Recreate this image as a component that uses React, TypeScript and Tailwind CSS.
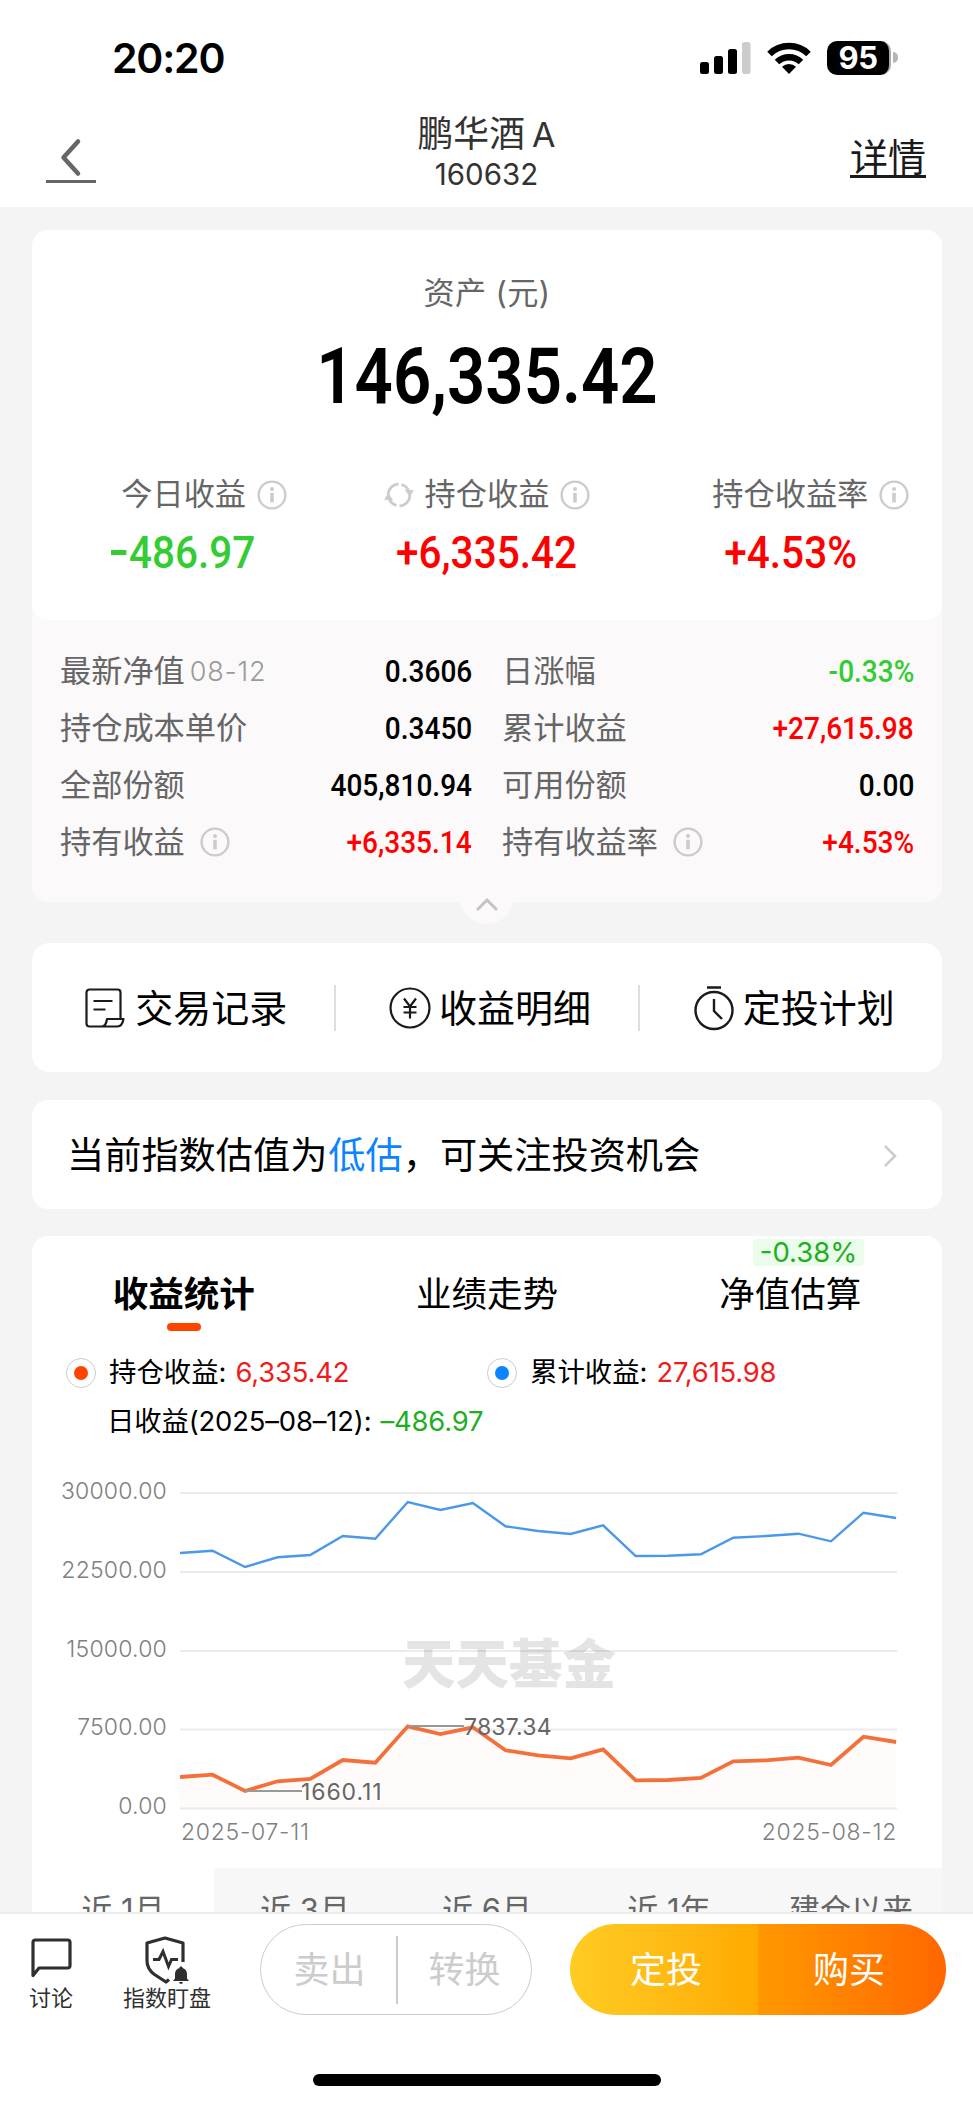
import type { ReactNode } from "react";

const latestProfit = [
  951, 944, 993, 964, 957, 900, 908, 799, 822, 802, 871, 886, 895, 868, 961,
  960, 954, 904, 901, 893, 915, 830, 846,
];
const totalProfit = [
  279, 272, 321, 292, 285, 228, 236, 126, 150, 129, 199, 213, 222, 196, 288,
  287.5, 283, 233, 228, 221, 244, 158, 174,
];

const toPoints = (values: number[]) =>
  values
    .map((v, i) => `${(i * 32.55).toFixed(1)},${((v - 99) / 3 + 10).toFixed(1)}`)
    .join(" ");

const InfoIcon = () => (
  <svg width="30" height="30" viewBox="0 0 30 30" fill="none">
    <circle cx="15" cy="15" r="13.4" stroke="#cccccc" strokeWidth="2.4" />
    <circle cx="15" cy="9" r="2" fill="#cccccc" />
    <path d="M15 12.800v9.600" stroke="#cccccc" strokeWidth="3.6" />
  </svg>
);

const RefreshIcon = () => (
  <svg width="32" height="30" viewBox="0 0 32 30" fill="none">
    <path
      d="M15.500 3.500A11.300 11.300 0 0 0 4.700 17M18.500 3.800A11.300 11.300 0 0 1 26.500 11M16.500 26.500A11.300 11.300 0 0 0 27.300 13M13.500 26.200A11.300 11.300 0 0 1 5.500 19"
      stroke="#cccccc"
      strokeWidth="3"
    />
    <path d="M0 20l4.500-6.500L10 20.500zM32 10l-4.500 6.500L22 9.500z" fill="#cccccc" />
  </svg>
);

const BillIcon = () => (
  <svg width="42" height="42" viewBox="0 0 42 42" fill="none" stroke="#1a1a1a" strokeWidth="2.200">
    <path d="M35.500 31V5.500a3 3 0 0 0-3-3h-28a3 3 0 0 0-3 3v31a3 3 0 0 0 3 3h28q4.500 0 6-7.500H22q-1 7.500-5.500 7.500" strokeLinejoin="round" />
    <path d="M8.500 14h19M8.500 22.500h12" />
  </svg>
);

const YenIcon = () => (
  <svg width="42" height="42" viewBox="0 0 42 42" fill="none" stroke="#1a1a1a" strokeWidth="2.200">
    <circle cx="21" cy="21" r="19.500" />
    <path d="M15 11.500l6 8 6-8M21 19.500v12M14.500 20h13M14.500 25.500h13" />
  </svg>
);

const TimerIcon = () => (
  <svg width="42" height="46" viewBox="0 0 42 46" fill="none" stroke="#1a1a1a" strokeWidth="2.400">
    <circle cx="21" cy="25.500" r="18.500" />
    <path d="M14 2.500h14M21 14v12l8 8" />
  </svg>
);

const CommentIcon = () => (
  <svg width="42" height="48" viewBox="0 0 42 48" fill="none">
    <path
      d="M3 39.500V6.500a2.500 2.500 0 0 1 2.500-2.500h32a2.500 2.500 0 0 1 2.500 2.500v23a2.500 2.500 0 0 1-2.500 2.500H9z"
      stroke="#2f2f2f"
      strokeWidth="3.200"
      strokeLinejoin="round"
    />
  </svg>
);

const ShieldIcon = () => (
  <svg width="46" height="48" viewBox="0 0 46 48" fill="none">
    <path
      d="M39 26V7L21 2 3 7v18q0 8 7.500 13.500l11.500 7.500 3-2.500"
      stroke="#2f2f2f"
      strokeWidth="3.200"
      strokeLinejoin="round"
    />
    <path d="M9 23.500h6l4-8 5.500 15 3-7h6.500" stroke="#2f2f2f" strokeWidth="3" />
    <path
      d="M37 30.500c1 0 1.600.6 1.700 1.500 2.800.9 4.300 3 4.300 6v4.500l2 2.500H29l2-2.500V38c0-3 1.500-5.100 4.300-6 .1-.9.7-1.500 1.700-1.500zM35 46h4q-.5 2-2 2t-2-2z"
      fill="#2f2f2f"
    />
  </svg>
);

const StatusBar = () => (
  <div className="flex h-[115px] items-center justify-between pl-[112px] pr-[75px]">
    <span className="pt-[2px] text-[41px] font-semibold tracking-[-1.2px]">20:20</span>
    <div className="flex items-center">
      <svg width="51" height="32" viewBox="0 0 51 32">
        <rect x="0" y="20" width="9" height="12" rx="2.500" />
        <rect x="14" y="14" width="9" height="18" rx="2.500" />
        <rect x="28" y="7" width="9" height="25" rx="2.500" />
        <rect x="42" y="0" width="8.500" height="32" rx="2.500" fill="#ccc" />
      </svg>
      <svg className="ml-4" width="44" height="32" viewBox="0 0 44 32" fill="none" stroke="#000" strokeWidth="6.500">
        <path d="M2.500 12a28 28 0 0 1 39 0" />
        <path d="M10 20a17.500 17.500 0 0 1 24 0" />
        <path d="M22 32l-7-7.200a10 10 0 0 1 14 0z" fill="#000" stroke="none" />
      </svg>
      <div className="ml-4 flex h-[34px] w-[64px] items-center justify-center rounded-[10px] border-r-2 border-[#aaa] bg-black text-[31px] font-bold tracking-[-0.5px] text-white">
        95
      </div>
      <div className="ml-[2px] h-[11px] w-[5px] rounded-r-full bg-[#b5b5b5]" />
    </div>
  </div>
);

const Header = () => (
  <div className="flex h-[92px] items-start justify-between px-[46px]">
    <div className="mt-[22px] flex h-[46px] w-[50px] justify-center border-b-[3px] border-[#666]">
      <svg width="24" height="40" viewBox="0 0 24 40" fill="none">
        <path d="M19 4.500L4.500 20.500 19 36.500" stroke="#666" strokeWidth="4.500" strokeLinecap="round" strokeLinejoin="round" />
      </svg>
    </div>
    <div className="flex flex-col items-center pl-[27px] text-[#333]">
      <span className="mt-px flex h-[38px] items-center gap-[7px] text-[35.800px]">
        鹏华酒<span className="text-[34px]">A</span>
      </span>
      <span className="mt-[2px] flex h-[38px] items-center text-[29.500px]">160632</span>
    </div>
    <div className="mr-px mt-[24px] flex h-[39px] items-center border-b-[3px] border-[#1a1a1a] text-[38px] text-[#1a1a1a]">
      详情
    </div>
  </div>
);

type SummaryProps = {
  label: string;
  value: string;
  color: string;
  refresh?: boolean;
};

const Summary = ({ label, value, color, refresh }: SummaryProps) => (
  <div className="flex flex-1 flex-col items-center">
    <div className="flex h-[34px] items-center gap-[11px]">
      <span className="flex w-[30px] justify-center">{refresh && <RefreshIcon />}</span>
      <span className="whitespace-nowrap text-[31.200px] text-[#666]">{label}</span>
      <InfoIcon />
    </div>
    <span className={`mt-[15px] flex h-[50px] origin-center scale-x-[0.9] items-center font-[Roboto] text-[45px] font-medium ${color}`}>
      {value.startsWith("-") ? (
        <>
          <span className="mr-[3px] inline-block h-[5px] w-[17px] bg-current" />
          {value.slice(1)}
        </>
      ) : (
        value
      )}
    </span>
  </div>
);

type DetailProps = {
  label: string;
  value: string;
  color?: string;
  date?: string;
  info?: boolean;
};

const Detail = ({ label, value, color = "text-black", date, info }: DetailProps) => (
  <div className="flex h-[57px] items-center justify-between">
    <span className="flex items-center text-[31.200px] text-[#666]">
      {label}
      {date && <span className="ml-[5px] text-[27px] font-light tracking-[0.8px] text-[#999]">{date}</span>}
      {info && (
        <span className="ml-[15px]">
          <InfoIcon />
        </span>
      )}
    </span>
    <span className={`origin-right scale-x-[0.89] font-[Roboto] text-[31.500px] font-medium ${color}`}>{value}</span>
  </div>
);

const AssetCard = () => (
  <div className="relative h-[672px] shrink-0 rounded-[16px] bg-[#fbf9fa]">
    <div className="flex h-[390px] flex-col rounded-[16px] bg-white pt-[47px]">
      <span className="flex h-[34px] items-center justify-center text-[31.200px] tracking-[0.3px] text-[#666]">资产 (元)</span>
      <span className="mt-[24px] flex h-[84px] scale-x-[0.86] items-center justify-center font-[Roboto] text-[78px] font-semibold">
        146,335.42
      </span>
      <div className="mt-[59px] flex">
        <Summary label="今日收益" value="-486.97" color="text-[#33cc33]" />
        <Summary label="持仓收益" value="+6,335.42" color="text-[#ff0000]" refresh />
        <Summary label="持仓收益率" value="+4.53%" color="text-[#ff0000]" />
      </div>
    </div>
    <div className="grid grid-cols-2 gap-x-[30px] px-[28px] pt-[23px]">
      <Detail label="最新净值" date="08-12" value="0.3606" />
      <Detail label="日涨幅" value="-0.33%" color="text-[#33cc33]" />
      <Detail label="持仓成本单价" value="0.3450" />
      <Detail label="累计收益" value="+27,615.98" color="text-[#ff0000]" />
      <Detail label="全部份额" value="405,810.94" />
      <Detail label="可用份额" value="0.00" />
      <Detail label="持有收益" info value="+6,335.14" color="text-[#ff0000]" />
      <Detail label="持有收益率" info value="+4.53%" color="text-[#ff0000]" />
    </div>
    <div className="absolute -bottom-[22px] left-[428px] flex h-[54px] w-[54px] items-center justify-center rounded-full bg-[#fbf9fa]">
      <svg className="mt-[14px]" width="22" height="14" viewBox="0 0 22 14" fill="none">
        <path d="M2 12l9-9 9 9" stroke="#c4c4c4" strokeWidth="3" strokeLinecap="round" />
      </svg>
    </div>
  </div>
);

const Action = ({ icon, label }: { icon: ReactNode; label: string }) => (
  <div className="flex flex-1 items-center justify-center gap-[8px] pl-[6px] text-[38px]">
    {icon}
    {label}
  </div>
);

const Actions = () => (
  <div className="mt-[41px] flex h-[129px] shrink-0 items-center rounded-[18px] bg-white">
    <Action icon={<BillIcon />} label="交易记录" />
    <div className="h-[46px] w-[1.500px] bg-[#ddd]" />
    <Action icon={<YenIcon />} label="收益明细" />
    <div className="h-[46px] w-[1.500px] bg-[#ddd]" />
    <Action icon={<TimerIcon />} label="定投计划" />
  </div>
);

const Notice = () => (
  <div className="mt-[28px] flex h-[109px] shrink-0 items-center justify-between rounded-[16px] bg-white pl-[35px] pr-[44px] pt-[2px]">
    <span className="text-[37.200px]">
      当前指数估值为<span className="ml-px text-[#0a84ff]">低估</span>，可关注投资机会
    </span>
    <svg width="16" height="24" viewBox="0 0 16 24" fill="none">
      <path d="M3 2l10 10L3 22" stroke="#ccc" strokeWidth="2.500" />
    </svg>
  </div>
);

type LegendProps = { dot: string; label: string; value: string };

const Legend = ({ dot, label, value }: LegendProps) => (
  <div className="flex w-[421px] items-center text-[27.400px]">
    <span className="mr-[13px] flex h-[30px] w-[30px] items-center justify-center rounded-full border border-[#ccc]">
      <span className={`h-[14px] w-[14px] rounded-full ${dot}`} />
    </span>
    {label}:<span className="ml-[9px] tracking-[-0.2px] text-[#ee1c1c]">{value}</span>
  </div>
);

const Chart = () => (
  <div className="mt-[38px] flex h-[388px] flex-col pr-[45px]">
    <div className="flex">
      <div className="flex h-[337px] w-[137px] flex-col justify-between text-right text-[23px] font-light leading-[22px] tracking-[0.2px] text-[#808080]">
        <span>30000.00</span>
        <span>22500.00</span>
        <span>15000.00</span>
        <span>7500.00</span>
        <span>0.00</span>
      </div>
      <div className="relative ml-[13px] h-[337px] w-[717px]">
        <svg className="mt-[3px]" width="717" height="334" viewBox="0 0 717 334" fill="none">
          <text
            x="222"
            y="201"
            fontSize="53.5"
            fontWeight="900"
            fill="#e4e4e4"
            fontFamily="Noto Sans CJK SC, sans-serif"
          >
            天天基金
          </text>
          {[10, 89, 168, 246.5, 325.5].map((y) => (
            <path key={y} d={`M0 ${y}h717`} stroke="#000" strokeOpacity="0.08" strokeWidth="2" />
          ))}
          <polygon points={`0,325.5 ${toPoints(latestProfit)} 716,325.5`} fill="#ff4400" fillOpacity="0.02" />
          <polyline points={toPoints(totalProfit)} stroke="#4a98ea" strokeWidth="2.400" />
          <polyline points={toPoints(latestProfit)} stroke="#f4703a" strokeWidth="3.800" />
          <path d="M228 243h56M65 308h57" stroke="#999" strokeWidth="2" />
        </svg>
        <span className="absolute left-[284px] top-[233px] text-[23px] leading-[28px] tracking-[0.2px] text-[#666]">7837.34</span>
        <span className="absolute left-[121px] top-[298px] text-[23px] leading-[28px] tracking-[0.9px] text-[#666]">1660.11</span>
      </div>
    </div>
    <div className="mt-[3px] flex justify-between pl-[149px] text-[23px] font-light leading-[24px] tracking-[0.7px] text-[#808080]">
      <span>2025-07-11</span>
      <span>2025-08-12</span>
    </div>
  </div>
);

const StatsCard = () => (
  <div className="relative mt-[27px] shrink-0 rounded-t-[16px] bg-white">
    <div className="flex pt-[39px] text-[35.500px]">
      <div className="flex flex-1 flex-col items-center font-bold">
        <span className="flex h-[40px] items-center">收益统计</span>
        <span className="mt-[8px] h-[8px] w-[34px] rounded-full bg-[#ff4400]" />
      </div>
      <span className="flex h-[40px] flex-1 items-center justify-center">业绩走势</span>
      <span className="flex h-[40px] flex-1 items-center justify-center">净值估算</span>
    </div>
    <span className="absolute left-[721px] top-[3px] flex h-[27px] w-[111px] items-center justify-center rounded-[4px] bg-[#eafcea] text-[27.500px] text-[#1fae1f]">
      -0.38%
    </span>
    <div className="flex pl-[34px] pt-[27px]">
      <Legend dot="bg-[#ff4400]" label="持仓收益" value="6,335.42" />
      <Legend dot="bg-[#0a84ff]" label="累计收益" value="27,615.98" />
    </div>
    <div className="mt-[14px] flex h-[40px] items-center pl-[75px] text-[27.400px] tracking-[-0.15px]">
      日收益(2025–08–12):<span className="ml-[9px]">
        <span className="text-[#1fae1f]">–486.97</span>
      </span>
    </div>
    <Chart />
    <div className="flex text-[31px] text-[#666]">
      {["近 1月", "近 3月", "近 6月", "近 1年", "建仓以来"].map((range, i) => (
        <span
          key={range}
          className={`flex h-[82px] flex-1 items-center justify-center ${i === 0 ? "bg-white" : "bg-[#f7f7f7]"}`}
        >
          {range}
        </span>
      ))}
    </div>
  </div>
);

const BottomBar = () => (
  <div className="h-[192px] shrink-0 border-t-2 border-[#ececec] bg-white">
    <div className="flex pt-[10px] text-[36px]">
      <div className="flex w-[102px] flex-col items-center pt-[12px] text-[22px] text-[#2f2f2f]">
        <CommentIcon />
        <span className="mt-px leading-[26px]">讨论</span>
      </div>
      <div className="flex w-[130px] flex-col items-center pt-[12px] text-[22px] text-[#2f2f2f]">
        <ShieldIcon />
        <span className="mt-px leading-[26px]">指数盯盘</span>
      </div>
      <div className="ml-[28px] flex h-[91px] w-[272px] items-center rounded-full border-[1.500px] border-[#ccc] text-[#ccc]">
        <span className="flex-1 pl-[2px] text-center">卖出</span>
        <span className="h-[68px] w-[2px] bg-[#ccc]" />
        <span className="flex-1 text-center">转换</span>
      </div>
      <div className="ml-[38px] flex h-[91px] w-[376px] overflow-hidden rounded-full text-white">
        <span className="flex w-1/2 items-center justify-center bg-linear-to-r from-[#ffcc22] to-[#ffaa00] pl-[4px]">定投</span>
        <span className="flex w-1/2 items-center justify-center bg-linear-to-r from-[#ff9800] to-[#ff6600] pr-[6px]">购买</span>
      </div>
    </div>
    <div className="mx-auto mt-[59px] h-[12px] w-[348px] rounded-full bg-black" />
  </div>
);

const App = () => {
  return (
    <div className="flex h-[2104px] w-[973px] flex-col overflow-hidden bg-[#f4f4f4] font-[Inter,'Noto_Sans_CJK_SC',sans-serif] leading-none text-black">
      <div className="h-[207px] shrink-0 bg-white">
        <StatusBar />
        <Header />
      </div>
      <div className="flex min-h-0 flex-1 flex-col overflow-hidden pl-[32px] pr-[31px] pt-[23px]">
        <AssetCard />
        <Actions />
        <Notice />
        <StatsCard />
      </div>
      <BottomBar />
    </div>
  );
};

export default App;
